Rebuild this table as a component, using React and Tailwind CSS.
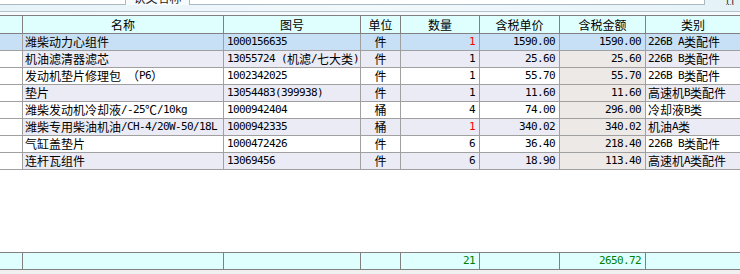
import React from "react";

const cols = "grid grid-cols-[23px_201px_137px_40px_79px_80px_86px_1fr]";

function T({ s }) {
  const parts = s.split(/([\x20-\x7e]+)/).filter((p) => p.length > 0);
  return (
    <>
      {parts.map((p, i) =>
        /^[\x20-\x7e]+$/.test(p) ? (
          <span key={i} className="font-['DejaVu_Sans_Mono'] text-[11px] tracking-[-0.62px] whitespace-pre">
            {p}
          </span>
        ) : (
          <span key={i} className="whitespace-pre">{p}</span>
        )
      )}
    </>
  );
}

const rows = [
  ["潍柴动力心组件", "1000156635", "件", "1", true, "1590.00", "1590.00", "226B A类配件"],
  ["机油滤清器滤芯", "13055724 (机滤/七大类)", "件", "1", false, "25.60", "25.60", "226B B类配件"],
  ["发动机垫片修理包 （P6）", "1002342025", "件", "1", false, "55.70", "55.70", "226B B类配件"],
  ["垫片", "13054483(399938)", "件", "1", false, "11.60", "11.60", "高速机B类配件"],
  ["潍柴发动机冷却液/-25℃/10kg", "1000942404", "桶", "4", false, "74.00", "296.00", "冷却液B类"],
  ["潍柴专用柴油机油/CH-4/20W-50/18L", "1000942335", "桶", "1", true, "340.02", "340.02", "机油A类"],
  ["气缸盖垫片", "1000472426", "件", "6", false, "36.40", "218.40", "226B B类配件"],
  ["连杆瓦组件", "13069456", "件", "6", false, "18.90", "113.40", "高速机A类配件"],
];

const headers = ["名称", "图号", "单位", "数量", "含税单价", "含税金额", "类别"];

export default function App() {
  return (
    <div className="w-[740px] h-[274px] overflow-hidden flex flex-col bg-white font-['Noto_Sans_CJK_SC',sans-serif] text-[12px] text-black">
      {/* top strip */}
      <div className="h-[15px] shrink-0 bg-gradient-to-r from-[#e6f3f9] via-[#f2f9fc] to-[#e4f2f8] flex flex-col">
        <div className="h-[11px] flex items-start">
          <div className="w-[126px] h-[5px] bg-white border-r border-b border-[#aab8c2]" />
          <div className="w-[64px] h-[5px] overflow-hidden flex justify-center bg-[#f6fbfd] border-r border-[#aab8c2]">
            <span className="text-[12px] leading-[12px] -mt-[8px] text-[#222]">认文名称</span>
          </div>
          <div className="w-[515px] h-[5px] bg-white border-r border-b border-[#aab8c2]" />
          <div className="flex-1 h-[5px] overflow-hidden pl-[20px]">
            <span className="text-[12px] leading-[12px] -mt-[8px] block text-[#222]">件数</span>
          </div>
        </div>
        <div className="h-px bg-[#b4c3cc]" />
        <div className="flex-1 bg-[#f4fafd]" />
      </div>

      {/* header */}
      <div className={`${cols} h-[19px] shrink-0 border-t border-b border-[#808080] bg-[#dfffff]`}>
        <div className="border-r border-[#808080]" />
        {headers.map((h, i) => (
          <div
            key={h}
            className={`flex items-center justify-center leading-[16px] ${i < headers.length - 1 ? "border-r border-[#808080]" : ""}`}
          >
            {h}
          </div>
        ))}
      </div>

      {/* data rows */}
      {rows.map((r, idx) => {
        const sel = idx === 0;
        const rowBg = sel ? "bg-[#c7e0f5]" : idx % 2 === 1 ? "bg-[#ebebf6]" : "bg-white";
        const firstBg = sel ? "bg-[#c7e0f5]" : "bg-white";
        const amtBg = sel ? "bg-[#c7e0f5]" : "bg-[#ece9e6]";
        return (
          <div key={idx} className={`${cols} h-[17px] shrink-0 border-b border-[#a0a0a0] leading-[16px]`}>
            <div className={`border-r border-[#a0a0a0] ${firstBg}`} />
            <div className={`border-r border-[#a0a0a0] ${rowBg} pl-[2px] flex items-center overflow-hidden whitespace-nowrap`}>
              <T s={r[0]} />
            </div>
            <div className={`border-r border-[#a0a0a0] ${rowBg} pl-[3px] flex items-center overflow-hidden whitespace-nowrap`}>
              <T s={r[1]} />
            </div>
            <div className={`border-r border-[#a0a0a0] ${rowBg} flex items-center justify-center`}>
              {r[2]}
            </div>
            <div className={`border-r border-[#a0a0a0] ${rowBg} pr-[4px] flex items-center justify-end ${r[4] ? "text-[#ff0000]" : ""}`}>
              <T s={r[3]} />
            </div>
            <div className={`border-r border-[#a0a0a0] ${rowBg} pr-[4px] flex items-center justify-end`}>
              <T s={r[5]} />
            </div>
            <div className={`border-r border-[#a0a0a0] ${amtBg} pr-[4px] flex items-center justify-end`}>
              <T s={r[6]} />
            </div>
            <div className={`${rowBg} pl-[2px] flex items-center overflow-hidden whitespace-nowrap`}>
              <T s={r[7]} />
            </div>
          </div>
        );
      })}

      {/* empty area */}
      <div className="flex-1 bg-white" />

      {/* footer */}
      <div className={`${cols} h-[18px] shrink-0 border-t border-b border-[#808080] bg-[#dfffff] text-[#008000] leading-[16px]`}>
        <div className="border-r border-[#808080]" />
        <div className="border-r border-[#808080]" />
        <div className="border-r border-[#808080]" />
        <div className="border-r border-[#808080]" />
        <div className="border-r border-[#808080] pr-[4px] flex items-center justify-end">
          <T s="21" />
        </div>
        <div className="border-r border-[#808080]" />
        <div className="border-r border-[#808080] pr-[4px] flex items-center justify-end">
          <T s="2650.72" />
        </div>
        <div />
      </div>

      {/* bottom strip */}
      <div className="h-[4px] shrink-0 bg-[#f0f0f0]" />
    </div>
  );
}
